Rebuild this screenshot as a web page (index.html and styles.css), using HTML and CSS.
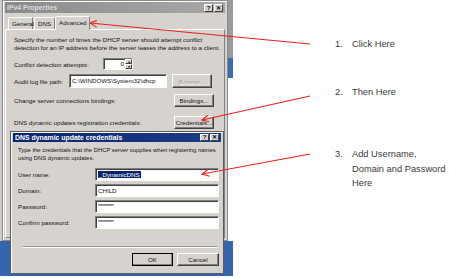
FILE: index.html
```html
<!DOCTYPE html>
<html lang="en">
<head>
  <meta charset="UTF-8" />
  <title>DHCP DNS credentials</title>
  <link rel="stylesheet" href="styles.css">
</head>
<body>
  <div class="page">

    <!-- Screenshot of the dialogs -->
    <div class="shot">
      <div class="bg bg-left"></div>
      <div class="bg bg-right"></div>
      <div class="bg bg-low"></div>

      <div class="win outer">
        <div class="titlebar inactive">
          <span>IPv4 Properties</span>
          <div class="tbtns"><i>?</i><i>✕</i></div>
        </div>
        <div class="tabs">
          <span class="tab">General</span>
          <span class="tab">DNS</span>
          <span class="tab active">Advanced</span>
        </div>
        <div class="panel">
          <p class="desc">Specify the number of times the DHCP server should attempt conflict<br>detection for an IP address before the server leases the address to a client.</p>
          <div class="row r-conflict">
            <span class="lbl">Conflict detection attempts:</span>
            <div class="spin"><span>0</span><div class="spin-btns"><b>▴</b><b>▾</b></div></div>
          </div>
          <div class="row r-audit">
            <span class="lbl">Audit log file path:</span>
            <div class="field path">C:\WINDOWS\System32\dhcp</div>
            <span class="btn disabled">Browse...</span>
          </div>
          <div class="row r-bind">
            <span class="lbl">Change server connections bindings:</span>
            <span class="btn">Bindings...</span>
          </div>
          <div class="row r-cred">
            <span class="lbl">DNS dynamic updates registration credentials:</span>
            <span class="btn">Credentials...</span>
          </div>
        </div>
      </div>

      <div class="win inner">
        <div class="titlebar active">
          <span>DNS dynamic update credentials</span>
          <div class="tbtns"><i>?</i><i>✕</i></div>
        </div>
        <div class="client">
          <p class="desc">Type the credentials that the DHCP server supplies when registering names<br>using DNS dynamic updates.</p>
          <div class="frow"><span class="lbl">User name:</span><div class="field"><span class="sel">_DynamicDNS</span></div></div>
          <div class="frow"><span class="lbl">Domain:</span><div class="field">CHILD</div></div>
          <div class="frow"><span class="lbl">Password:</span><div class="field pw">**********</div></div>
          <div class="frow"><span class="lbl">Confirm password:</span><div class="field pw">**********</div></div>
          <hr class="sep">
          <div class="actions">
            <span class="btn ok">OK</span>
            <span class="btn">Cancel</span>
          </div>
        </div>
      </div>
    </div>

    <!-- Steps -->
    <ol class="notes">
      <li class="n1"><span class="num">1.</span><span>Click Here</span></li>
      <li class="n2"><span class="num">2.</span><span>Then Here</span></li>
      <li class="n3"><span class="num">3.</span><span>Add Username,<br>Domain and Password<br>Here</span></li>
    </ol>

    <svg class="arrows" width="449" height="278" viewBox="0 0 449 278">
      <defs>
        <marker id="head" markerWidth="8" markerHeight="8" refX="7" refY="4" orient="auto" markerUnits="userSpaceOnUse">
          <path d="M0,0.5 L7,4 L0,7.5" fill="none" stroke="#e8201e" stroke-width="1.1"/>
        </marker>
      </defs>
      <line x1="310" y1="44" x2="90" y2="23" stroke="#e8201e" stroke-width="1.1" marker-end="url(#head)"/>
      <line x1="310" y1="96" x2="202" y2="120" stroke="#e8201e" stroke-width="1.1" marker-end="url(#head)"/>
      <line x1="310" y1="154" x2="202" y2="174" stroke="#e8201e" stroke-width="1.1" marker-end="url(#head)"/>
    </svg>
  </div>
</body>
</html>
```

FILE: styles.css
```css
* { margin: 0; padding: 0; box-sizing: border-box; }
html, body {
  width: 100%;
  height: 100%;
  background: #fff;
  overflow: hidden;
}
.page {
  position: relative;
  width: 449px;
  height: 278px;
  display: flex;
}

/* Dialog screenshot */
.shot {
  position: relative;
  width: 233px;
  height: 278px;
  flex: none;
  font-family: "Liberation Sans", Arial, sans-serif;
  font-size: 6.2px;
  color: #111;
  white-space: nowrap;
}
.bg { position: absolute; }
.bg-left { left: 0; top: 0; width: 3px; height: 241px; background: #c9ccd2; }
.bg-right {
  left: 228px; top: 0; width: 5px; height: 78px;
  background: linear-gradient(#9a9a9a 0 58px, #3a6bb0 58px);
}
.bg-low { left: 0; top: 241px; width: 233px; height: 35px; background: #3366aa; }

.win {
  position: absolute;
  background: #d6d3ce;
  border: 1px solid #8c8a86;
  box-shadow: inset 1px 1px #fff;
  padding: 1px 2px 3px;
}
.outer { left: 2px; top: 0; width: 226px; height: 241px; }
.inner { left: 10px; top: 131px; width: 214px; height: 143px; border-color: #5a5a5a; }

.titlebar {
  display: flex;
  align-items: center;
  justify-content: space-between;
  height: 11px;
  padding: 0 2px 0 2px;
  font-weight: bold;
  font-size: 6.9px;
}
.titlebar.inactive { background: linear-gradient(90deg, #8a8a8a, #a8a8a8); color: #dcdcdc; }
.titlebar.active { background: linear-gradient(90deg, #0a246a, #1c3c8c); color: #fff; height: 9px; }
.tbtns { display: flex; gap: 1px; }
.tbtns i {
  width: 9px;
  height: 8px;
  background: #d6d3ce;
  border: 1px solid;
  border-color: #fff #404040 #404040 #fff;
  font-style: normal;
  font-size: 6px;
  line-height: 6px;
  text-align: center;
  color: #000;
}
.active .tbtns i { height: 7px; line-height: 5px; }

/* Tabs */
.tabs {
  display: flex;
  align-items: flex-end;
  height: 16px;
  padding-left: 3px;
}
.tab {
  height: 12px;
  padding: 0 3px;
  border: 1px solid;
  border-bottom: none;
  border-color: #fff #808080 #808080 #fff;
  border-radius: 2px 2px 0 0;
  line-height: 11px;
  margin-right: 1px;
}
.tab:nth-child(1) { width: 25px; }
.tab:nth-child(2) { width: 21px; }
.tab.active {
  width: 35px;
  height: 14px;
  margin-left: -1px;
  margin-bottom: -1px;
  background: #d6d3ce;
  position: relative;
  z-index: 1;
  line-height: 12px;
}

.panel {
  height: 209px;
  border: 1px solid;
  border-color: #fff #808080 #808080 #fff;
  padding: 6px 10px 0 8px;
}
.desc { line-height: 8px; }

.row {
  display: flex;
  align-items: center;
  height: 14px;
}
.row .lbl { flex: 1; }
.r-conflict { margin-top: 6px; height: 12px; }
.r-audit { margin-top: 4px; }
.r-bind { margin-top: 5px; }
.r-cred { margin-top: 8px; }
.r-audit .lbl { flex: 0 0 55px; }

.field {
  background: #fff;
  border: 1px solid;
  border-color: #808080 #fff #fff #808080;
  box-shadow: inset 1px 1px #404040, 1px 1px #d6d3ce;
  height: 14px;
  padding: 0 2px;
  line-height: 12px;
  overflow: hidden;
}
.field.path { width: 98px; margin-right: 5px; }

.spin {
  display: flex;
  align-items: stretch;
  justify-content: flex-end;
  width: 30px;
  height: 12px;
  margin-right: 81px;
  background: #fff;
  border: 1px solid;
  border-color: #808080 #fff #fff #808080;
  box-shadow: inset 1px 1px #404040;
  line-height: 10px;
}
.spin > span { padding-right: 1px; }
.spin-btns { display: flex; flex-direction: column; width: 7px; }
.spin-btns b {
  flex: 1;
  background: #d6d3ce;
  border: 1px solid;
  border-color: #fff #404040 #404040 #fff;
  font-size: 4px;
  line-height: 3px;
  text-align: center;
  font-weight: normal;
}

.btn {
  display: flex;
  align-items: center;
  justify-content: center;
  width: 40px;
  height: 14px;
  background: #d6d3ce;
  border: 1px solid;
  border-color: #fff #404040 #404040 #fff;
  box-shadow: inset -1px -1px #808080;
}
.btn.disabled { color: #a09e9a; text-shadow: 1px 1px #fff; }
.r-bind .btn, .r-cred .btn { height: 13px; }

/* Inner dialog */
.client { padding: 4px 2px 0 5px; }
.client .desc { font-size: 5.9px; }
.frow {
  display: flex;
  align-items: center;
  height: 13px;
  margin-top: 3px;
}
.frow:first-of-type { margin-top: 6px; }
.frow .lbl { width: 77px; }
.frow .field { flex: 1; height: 13px; line-height: 11px; }
.sel { background: #0a246a; color: #fff; padding: 0 1px; }
.pw { font-size: 5px; letter-spacing: -0.4px; }

.sep {
  margin: 17px 2px 0 5px;
  border: none;
  border-top: 1px solid #9a9894;
  border-bottom: 1px solid #fff;
}
.actions {
  display: flex;
  justify-content: flex-end;
  gap: 4px;
  margin-top: 5px;
}
.actions .btn { width: 42px; height: 13px; }
.actions .btn.ok { width: 41px; outline: 1px solid #000; outline-offset: -1px; }

/* Steps */
.notes {
  list-style: none;
  padding: 37px 0 0 102px;
  font-family: "Liberation Sans", Arial, sans-serif;
  font-size: 9.3px;
  line-height: 14.5px;
  color: #3a3a3a;
}
.notes li { display: flex; }
.notes .num { width: 17px; flex: none; }
.n2 { margin-top: 33px; }
.n3 { margin-top: 48px; }

.arrows { position: absolute; left: 0; top: 0; pointer-events: none; }
```
